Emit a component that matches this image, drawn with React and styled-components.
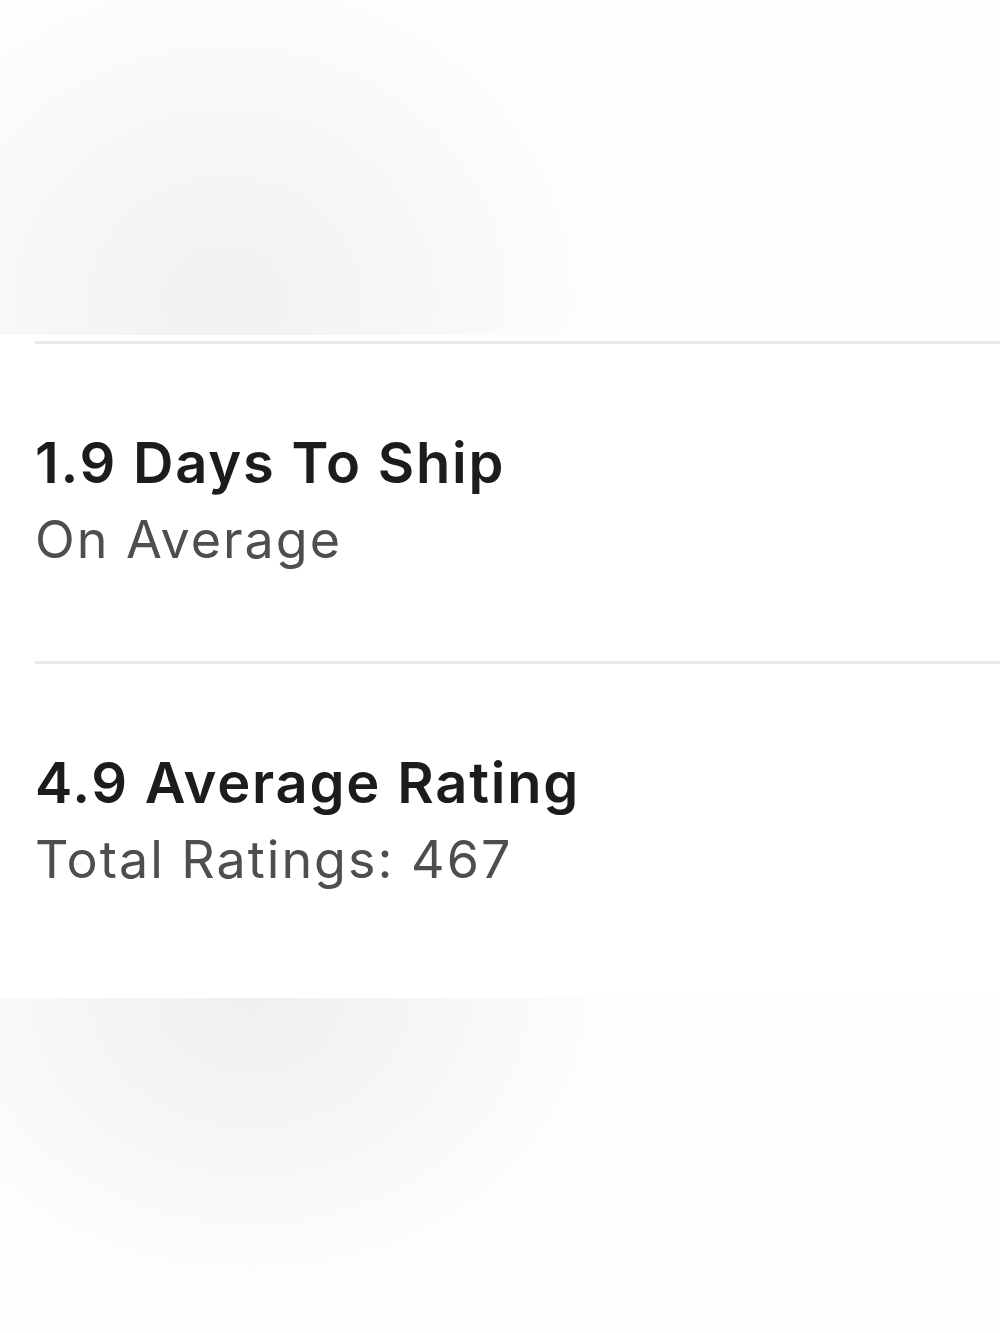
import React from "react";
import styled, { createGlobalStyle } from "styled-components";

const GlobalStyle = createGlobalStyle`
  html, body {
    margin: 0;
    padding: 0;
    background: #ffffff;
  }
  body {
    font-family: Inter, "Noto Sans", "Liberation Sans", sans-serif;
  }
`;

const stats = [
  { title: "1.9 Days To Ship", sub: "On Average" },
  { title: "4.9 Average Rating", sub: "Total Ratings: 467" }
];

const App = () => (
  <Page>
    <GlobalStyle />
    <Backdrop height="335px" />
    <Card>
      {stats.map(s => (
        <Stat key={s.title}>
          <Title>{s.title}</Title>
          <Sub>{s.sub}</Sub>
        </Stat>
      ))}
    </Card>
    <Backdrop flip />
  </Page>
);

export default App;

const Page = styled.div`
  display: flex;
  flex-direction: column;
  width: 1000px;
  height: 1333px;
  overflow: hidden;
`;

const Backdrop = styled.div`
  flex: ${props => (props.height ? "none" : "1")};
  height: ${props => props.height || "auto"};
  background-color: #fefefe;
  background-image: ${props =>
    props.flip
      ? "radial-gradient(ellipse 420px 340px at 250px 0px, #f0f0f0 0%, #f4f4f4 30%, #f9f9f9 60%, rgba(253,253,253,0.6) 85%, rgba(254,254,254,0) 100%)"
      : "radial-gradient(ellipse 420px 380px at 225px 300px, #f1f1f1 0%, #f5f5f5 30%, #f9f9f9 60%, rgba(252,252,252,0.6) 85%, rgba(254,254,254,0) 100%)"};
`;

const Card = styled.div`
  background: #ffffff;
  padding-left: 35px;
  padding-bottom: 17px;
`;

const Stat = styled.div`
  display: flex;
  flex-direction: column;
  border-top: 3px solid #e9e9e9;
  margin-top: 6px;
  padding-top: 80px;
  padding-bottom: 83px;

  & + & {
    margin-top: 0;
  }
`;

const Title = styled.div`
  font-size: 56px;
  font-weight: 600;
  color: #1c1c1c;
  line-height: 78px;
  letter-spacing: 1.8px;
`;

const Sub = styled.div`
  font-size: 52px;
  font-weight: 400;
  color: #4e4e4e;
  line-height: 76px;
  letter-spacing: 2px;
`;
